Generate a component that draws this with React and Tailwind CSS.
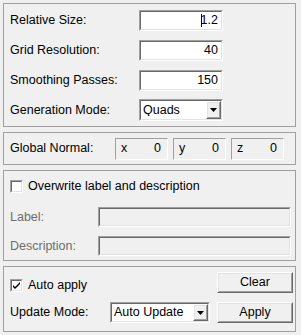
import React from 'react';

const sunkenOuter = 'border border-t-[#a0a0a0] border-l-[#a0a0a0] border-b-white border-r-white';
const sunkenInner = 'border border-t-[#696969] border-l-[#696969] border-b-[#e3e3e3] border-r-[#e3e3e3]';
const raisedOuter = 'border border-t-white border-l-white border-b-[#696969] border-r-[#696969]';
const raisedInner = 'border border-t-[#e3e3e3] border-l-[#e3e3e3] border-b-[#a0a0a0] border-r-[#a0a0a0]';

function Panel({ className = '', children }) {
  return <div className={`w-[293px] border border-[#a0a0a0] pl-[6px] ${className}`}>{children}</div>;
}

function TextField({ value, caret, className = '' }) {
  return (
    <div className={`${sunkenOuter} ${className}`}>
      <div className={`${sunkenInner} h-full bg-white flex items-center justify-end pr-[3px]`}>
        {caret && <span className="inline-block w-px h-[13px] bg-black mr-[-1px]" />}
        <span>{value}</span>
      </div>
    </div>
  );
}

function DisabledField({ className = '' }) {
  return (
    <div className={`${sunkenOuter} ${className}`}>
      <div className={`${sunkenInner} h-full bg-[#f0f0f0]`} />
    </div>
  );
}

function Select({ value, className = '' }) {
  return (
    <div className={`${sunkenOuter} ${className}`}>
      <div className={`${sunkenInner} h-full bg-white flex items-center`}>
        <span className="flex-1 pl-[2px] whitespace-nowrap overflow-hidden">{value}</span>
        <div className={`${raisedOuter} w-[15px] h-full bg-[#f0f0f0]`}>
          <div className={`${raisedInner} h-full flex items-center justify-center`}>
            <svg width="7" height="4" viewBox="0 0 7 4">
              <path d="M0 0h7L3.5 4z" fill="#000" />
            </svg>
          </div>
        </div>
      </div>
    </div>
  );
}

function Button({ children }) {
  return (
    <div className={`${raisedOuter} w-[76px] h-[21px] bg-[#f0f0f0]`}>
      <div className={`${raisedInner} h-full flex items-center justify-center`}>{children}</div>
    </div>
  );
}

function Checkbox({ checked }) {
  return (
    <div className={`${sunkenOuter} w-[13px] h-[13px]`}>
      <div className={`${sunkenInner} h-full bg-white flex items-center justify-center`}>
        {checked && (
          <svg width="7" height="7" viewBox="0 0 7 7">
            <path d="M0 3l2 2 5-5v2L2 7 0 5z" fill="#000" />
          </svg>
        )}
      </div>
    </div>
  );
}

function VecBox({ axis }) {
  return (
    <div className={`border border-t-[#a0a0a0] border-l-[#a0a0a0] border-b-white border-r-white w-[53px] h-[22px] flex items-center justify-between pl-[5px] pr-[6px]`}>
      <span>{axis}</span>
      <span>0</span>
    </div>
  );
}

export default function App() {
  return (
    <div className="w-[301px] h-[335px] bg-[#f0f0f0] text-black text-[12.5px] leading-none font-['Liberation_Sans',Arial,sans-serif] pt-[3px] pl-[3px] flex flex-col gap-[5px]">
      {/* Mesh settings */}
      <Panel className="h-[124px] pt-[6px] flex flex-col">
        <div className="flex items-center h-[21px]">
          <span className="w-[129px]">Relative Size:</span>
          <TextField value="1.2" caret className="w-[84px] h-[21px]" />
        </div>
        <div className="flex items-center h-[21px] mt-[9px]">
          <span className="w-[129px]">Grid Resolution:</span>
          <TextField value="40" className="w-[84px] h-[21px]" />
        </div>
        <div className="flex items-center h-[21px] mt-[9px]">
          <span className="w-[129px]">Smoothing Passes:</span>
          <TextField value="150" className="w-[84px] h-[21px]" />
        </div>
        <div className="flex items-center h-[22px] mt-[8px]">
          <span className="w-[129px]">Generation Mode:</span>
          <Select value="Quads" className="w-[84px] h-[22px]" />
        </div>
      </Panel>

      {/* Global normal */}
      <Panel className="h-[33px] flex items-center">
        <span className="w-[105px]">Global Normal:</span>
        <div className="flex gap-[5px]">
          <VecBox axis="x" />
          <VecBox axis="y" />
          <VecBox axis="z" />
        </div>
      </Panel>

      {/* Label and description */}
      <Panel className="h-[91px] pt-[9px] pr-[4px] flex flex-col">
        <div className="flex items-center gap-[5px] h-[13px]">
          <Checkbox />
          <span>Overwrite label and description</span>
        </div>
        <div className="flex items-center h-[20px] mt-[14px] text-[#6d6d6d]">
          <span className="w-[88px]">Label:</span>
          <DisabledField className="flex-1 h-[20px]" />
        </div>
        <div className="flex items-center h-[20px] mt-[9px] text-[#6d6d6d]">
          <span className="w-[88px]">Description:</span>
          <DisabledField className="flex-1 h-[20px]" />
        </div>
      </Panel>

      {/* Apply */}
      <Panel className="h-[66px] pt-[5px] pr-[2px] flex flex-col">
        <div className="flex items-center justify-between h-[21px]">
          <div className="flex items-center gap-[5px] mt-[5px]">
            <Checkbox checked />
            <span>Auto apply</span>
          </div>
          <Button>Clear</Button>
        </div>
        <div className="flex items-center justify-between h-[21px] mt-[9px]">
          <div className="flex items-center">
            <span className="w-[100px]">Update Mode:</span>
            <Select value="Auto Update" className="w-[100px] h-[21px]" />
          </div>
          <Button>Apply</Button>
        </div>
      </Panel>
    </div>
  );
}
